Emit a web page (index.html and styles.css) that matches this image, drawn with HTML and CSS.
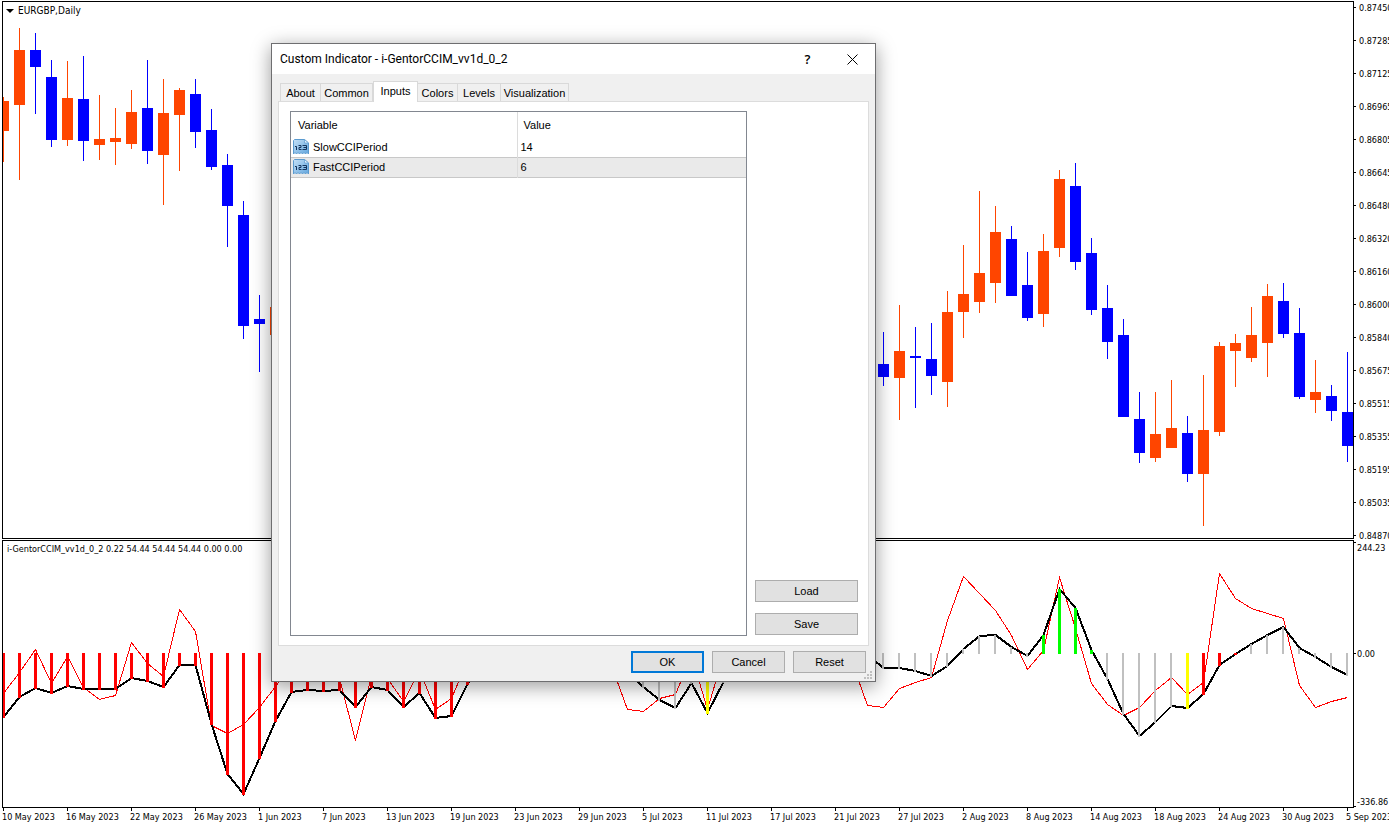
FILE: index.html
```html
<!DOCTYPE html>
<html lang="en">
<head>
<meta charset="utf-8">
<title>EURGBP,Daily</title>
<link rel="stylesheet" href="styles.css">
</head>
<body>
<main class="terminal">
  <section class="pane price-pane">
    <h1 class="pane-title symbol-title"><svg class="caret" viewBox="0 0 8 4" aria-hidden="true"><path d="M0 0h8L4 4z"/></svg>EURGBP,Daily</h1>
    <svg class="plot" id="price-plot" viewBox="3 2 1350 536" preserveAspectRatio="none" role="img" aria-label="Daily candles"></svg>
  </section>
  <ul class="axis price-axis">
    <li>0.87450</li><li>0.87285</li><li>0.87125</li><li>0.86965</li><li>0.86805</li><li>0.86645</li><li>0.86480</li><li>0.86320</li><li>0.86160</li><li>0.86000</li><li>0.85840</li><li>0.85675</li><li>0.85515</li><li>0.85355</li><li>0.85195</li><li>0.85035</li><li>0.84870</li>
  </ul>
  <section class="pane cci-pane">
    <h2 class="pane-title">i-GentorCCIM_vv1d_0_2 0.22 54.44 54.44 54.44 0.00 0.00</h2>
    <svg class="plot" id="cci-plot" viewBox="3 541 1350 266" preserveAspectRatio="none" role="img" aria-label="CCI histogram"></svg>
  </section>
  <ul class="axis cci-axis">
    <li>244.23</li><li>0.00</li><li>-336.86</li>
  </ul>
  <ul class="dates">
    <li>10 May 2023</li><li>16 May 2023</li><li>22 May 2023</li><li>26 May 2023</li><li>1 Jun 2023</li><li>7 Jun 2023</li><li>13 Jun 2023</li><li>19 Jun 2023</li><li>23 Jun 2023</li><li>29 Jun 2023</li><li>5 Jul 2023</li><li>11 Jul 2023</li><li>17 Jul 2023</li><li>21 Jul 2023</li><li>27 Jul 2023</li><li>2 Aug 2023</li><li>8 Aug 2023</li><li>14 Aug 2023</li><li>18 Aug 2023</li><li>24 Aug 2023</li><li>30 Aug 2023</li><li>5 Sep 2023</li>
  </ul>
</main>

<div class="dialog" role="dialog" aria-labelledby="dialog-title">
  <header class="titlebar">
    <h2 class="dialog-title" id="dialog-title">Custom Indicator - i-GentorCCIM_vv1d_0_2</h2>
    <button class="caption-button" type="button" aria-label="Help">?</button>
    <button class="caption-button" type="button" aria-label="Close"><svg class="close-icon" viewBox="0 0 11 11" aria-hidden="true"><path d="M.5.5l10 10M10.500.5l-10 10"/></svg></button>
  </header>
  <div class="dialog-body">
    <div class="tabs" role="tablist">
      <button class="tab" type="button" role="tab">About</button>
      <button class="tab" type="button" role="tab">Common</button>
      <button class="tab tab-active" type="button" role="tab" aria-selected="true">Inputs</button>
      <button class="tab" type="button" role="tab">Colors</button>
      <button class="tab" type="button" role="tab">Levels</button>
      <button class="tab" type="button" role="tab">Visualization</button>
    </div>
    <div class="tab-page" role="tabpanel">
      <div class="list">
        <table class="inputs">
          <thead><tr><th class="col-variable">Variable</th><th>Value</th></tr></thead>
          <tbody>
            <tr>
              <td><div class="variable"><svg class="type-icon" viewBox="0 0 16 16" aria-hidden="true"><use href="#number-icon"/></svg>SlowCCIPeriod</div></td>
              <td>14</td>
            </tr>
            <tr class="selected">
              <td><div class="variable"><svg class="type-icon" viewBox="0 0 16 16" aria-hidden="true"><use href="#number-icon"/></svg>FastCCIPeriod</div></td>
              <td>6</td>
            </tr>
          </tbody>
        </table>
      </div>
      <div class="side">
        <button class="button" type="button">Load</button>
        <button class="button" type="button">Save</button>
      </div>
    </div>
    <footer class="actions">
      <button class="button button-default" type="button">OK</button>
      <button class="button" type="button">Cancel</button>
      <button class="button" type="button">Reset</button>
    </footer>
  </div>
  <svg class="grip" viewBox="0 0 8 8" aria-hidden="true"><path d="M6 0h2v2H6zM3 3h2v2H3zM6 3h2v2H6zM0 6h2v2H0zM3 6h2v2H3zM6 6h2v2H6z"/></svg>
</div>

<svg class="defs" width="0" height="0" aria-hidden="true">
  <defs>
    <linearGradient id="sheet" x1="0" y1="0" x2="1" y2="1">
      <stop offset="0" stop-color="#c4e0f6"/><stop offset="1" stop-color="#62a6de"/>
    </linearGradient>
    <symbol id="number-icon" viewBox="0 0 16 16">
      <path d="M.5 1.500l1-1h10l4 3.500v11l-1.500-1.500-1.500 1.500-1.500-1.500-1.500 1.500L8 13.500 6.500 15 5 13.500 3.500 15 2 13.500.5 15z" fill="url(#sheet)" stroke="#5b9bd0" stroke-width="1"/>
      <path d="M11.500.5V4h4z" fill="#e4f2fd" stroke="#5b9bd0" stroke-width=".7"/>
      <path d="M2 7.500h1.500V11M5.500 6.500H8v2H6v2h2.500M9.500 6.500h4v4h-4M10.500 8.500h3" fill="none" stroke="#14345c" stroke-width="1"/>
    </symbol>
  </defs>
</svg>
<script src="chart.js"></script>
</body>
</html>
```
FILE: styles.css
```css
* { box-sizing: border-box; }

body {
  margin: 0;
  background: #fff;
  color: #000;
  overflow: hidden;
  font-family: "DejaVu Sans Condensed", "Open Sans", sans-serif;
  font-size: 9px;
}

h1, h2, ul { margin: 0; padding: 0; font-weight: normal; list-style: none; }

.terminal {
  display: grid;
  grid-template-columns: minmax(0, 1fr) 35px;
  grid-template-rows: minmax(0, 538fr) minmax(0, 269fr) 17px;
  height: 100vh;
  padding: 1px 0 0 2px;
}

.pane { position: relative; border: 1px solid #000; }
.cci-pane, .cci-axis { margin-top: 1px; }

.plot { display: block; width: 100%; height: 100%; shape-rendering: crispEdges; }

.pane-title {
  position: absolute;
  top: 1px;
  left: 4px;
  display: flex;
  align-items: center;
  gap: 4px;
  font-size: 9px;
  line-height: 15px;
  white-space: nowrap;
}
.symbol-title { left: 3px; font-size: 10px; }
.caret { width: 8px; height: 4px; }

.axis { line-height: 14px; white-space: nowrap; }
.axis li { position: relative; height: 13px; padding-left: 3px; }
.axis li::before {
  content: "";
  position: absolute;
  left: 0;
  top: 6px;
  width: 2px;
  height: 1px;
  background: #000;
}
.price-axis {
  display: flex;
  flex-direction: column;
  justify-content: space-between;
  margin-bottom: -3px;
}
.price-axis li { padding-left: 5px; }
.cci-axis { display: grid; grid-template-rows: 106fr 148fr 13px; padding-top: 1px; }
.cci-axis li:first-child::before { top: 1px; }
.cci-axis li:last-child::before { top: 11px; }

.dates {
  grid-column: 1 / -1;
  display: flex;
  overflow: hidden;
  line-height: 18px;
  white-space: nowrap;
}
.dates li { position: relative; flex: 0 0 calc(100% * 64 / 1387); }
.dates li::before {
  content: "";
  position: absolute;
  left: 1px;
  top: 0;
  width: 1px;
  height: 3px;
  background: #000;
}

.up { fill: #ff4500; }
.down { fill: #00f; }
.cci { fill: none; stroke: #000; stroke-width: 2; }
.fast { fill: none; stroke: #f00; stroke-width: 1; }
.bar-red { fill: #f00; }
.bar-gray { fill: #c0c0c0; }
.bar-lime { fill: #0f0; }
.bar-yellow { fill: #ff0; }

.dialog {
  position: absolute;
  top: 43px;
  left: 271px;
  display: flex;
  flex-direction: column;
  width: 605px;
  height: 639px;
  border: 1px solid #6e6e70;
  background: #f0f0f0;
  box-shadow: 0 4px 18px rgba(0, 0, 0, .4);
  font-family: "Liberation Sans", Arial, sans-serif;
  font-size: 11px;
}

button { margin: 0; padding: 0; color: #000; font: inherit; }

.titlebar { display: flex; align-items: center; height: 30px; padding-left: 8px; background: #fff; }
.dialog-title { flex: 1; font-family: Roboto, sans-serif; font-size: 12px; }
.caption-button {
  width: 45px;
  height: 30px;
  border: 0;
  background: none;
  font-family: "Open Sans", sans-serif;
  font-size: 13px;
  font-weight: 600;
}
.close-icon { display: block; width: 11px; height: 11px; margin: auto; stroke: #000; }

.dialog-body { flex: 1; display: flex; flex-direction: column; padding: 7px 6px 8px; }

.tabs {
  display: grid;
  grid-template-columns: 41px 52px 45px 40px 43px 68px;
  align-items: end;
  padding-left: 2px;
}
.tab {
  height: 18px;
  border: 1px solid #d9d9d9;
  border-width: 1px 1px 0 0;
  background: #f0f0f0;
}
.tab:first-child { border-left-width: 1px; }
.tab-active {
  position: relative;
  height: 21px;
  margin-bottom: -1px;
  padding-bottom: 3px;
  border-left-width: 1px;
  background: #fff;
}

.tab-page {
  flex: 1;
  display: flex;
  gap: 8px;
  padding: 9px 10px 9px 11px;
  border: 1px solid #dcdcdc;
  background: #fff;
}
.list { flex: 1; border: 1px solid #828790; }
.inputs { width: 100%; border-collapse: collapse; table-layout: fixed; }
.inputs th { height: 25px; padding: 0 6px; font-weight: normal; text-align: left; }
.inputs th:first-child { padding-left: 7px; }
.inputs td { height: 20px; padding: 0 3px; }
.inputs th + th, .inputs td + td { border-left: 1px solid #dcdcdc; }
.col-variable { width: 226px; }
.inputs .selected { border: 1px solid #c8c8c8; border-width: 1px 0; background: #eaeaea; }
.variable { display: flex; align-items: center; gap: 4px; }
.type-icon { width: 16px; height: 16px; margin-left: -1px; }

.side { display: flex; flex-direction: column; justify-content: flex-end; gap: 11px; width: 103px; padding-bottom: 1px; }
.button { height: 22px; border: 1px solid #adadad; background: #e1e1e1; }
.button-default { border: 2px solid #0078d7; }
.actions { display: flex; justify-content: flex-end; gap: 8px; padding: 5px 3px 0 0; }
.actions .button { width: 73px; }

.grip { position: absolute; right: 3px; bottom: 2px; width: 8px; height: 8px; fill: #bfbfbf; }
.defs { position: absolute; }
```
FILE: chart.js
```js
// Candle rows: slot, direction (1 up, 0 down), high, body top, body bottom, low.
const candles = [
  [0,1,97,101,131,162],[1,1,28,50,105,180],[2,0,33,50,67,114],[3,0,60,77,140,147],
  [4,1,61,98,140,146],[5,0,56,99,141,161],[6,1,95,139,145,160],[7,1,108,138,142,165],
  [8,1,90,112,144,149],[9,0,60,108,151,164],[10,1,79,113,155,205],[11,1,88,90,115,171],
  [12,0,79,94,132,148],[13,0,109,130,167,170],[14,0,154,165,206,247],[15,0,201,215,326,339],
  [16,0,295,319,324,372],[17,1,307,307,335,335],
  [55,0,332,364,377,386],[56,1,305,351,378,420],[57,0,327,356,358,408],[58,0,323,359,376,395],
  [59,1,291,312,382,407],[60,1,245,294,312,338],[61,1,191,273,302,313],[62,1,206,232,283,303],
  [63,0,226,239,296,296],[64,0,252,285,318,321],[65,1,234,251,314,327],[66,1,170,179,248,257],
  [67,0,163,186,262,270],[68,0,238,253,310,315],[69,0,285,308,342,359],[70,0,319,335,417,417],
  [71,0,392,419,453,463],[72,1,392,434,458,462],[73,1,380,428,448,448],[74,0,416,433,474,482],
  [75,1,375,430,474,526],[76,1,342,346,432,436],[77,1,334,343,351,387],[78,1,307,335,358,362],
  [79,1,284,296,343,377],[80,0,283,301,334,338],[81,0,308,333,397,399],[82,1,360,392,400,413],
  [83,0,385,396,411,421],[84,0,352,412,446,462]
];

// Each run starts at a slot and lists one value per following slot.
const slowRuns = [
  [0, [717,697,688,693,686,689,689,689,678,681,687,665,665,724,774,794,758,721,692,690,691,690,707,687,690,707,693,718,716,684,665]],
  [39, [673,687,700,708,683,713,682]],
  [54, [655,668,668,671,676,666,649,636,635,647,656,635,589,608,650,679,714,736,722,706,708,694,665,654,644,635,627,648,657,667,675]]
];
const fastRuns = [
  [0, [693,672,649,683,656,687,699,695,642,663,676,609,631,725,733,724,707,686,665]],
  [20, [665,678,740,675,678,701,670,709,698,660]],
  [38, [665,709,711,698,694,655,709,655]],
  [53, [660,705,707,688,682,677,620,576,593,610,635,669,650,577,628,683,704,715,707,690,677,694,682,573,598,608,613,618,685,707,701,697]]
];

const slotX = i => 3 + 16 * i;
const zeroY = 653;
const rect = (cls, x, y, w, h) => `<rect class="${cls}" x="${x}" y="${y}" width="${w}" height="${h}"/>`;

document.getElementById("price-plot").innerHTML = candles.map(([i, up, high, top, bottom, low]) => {
  const cls = up ? "up" : "down";
  return rect(cls, slotX(i), high, 1, low - high) + rect(cls, slotX(i) - 5, top, 11, bottom - top);
}).join("");

const line = (cls, shift) => ([start, values]) =>
  `<polyline class="${cls}" points="${values.map((y, k) => `${slotX(start + k) + 0.5},${y + shift}`).join(" ")}"/>`;

function barColor(i) {
  if (i === 44 || i === 74) return "yellow";
  if (i < 31 || (i >= 75 && i <= 77)) return "red";
  if (i >= 65 && i <= 68) return "lime";
  return "gray";
}

const bars = slowRuns.flatMap(([start, values]) => values.map((y, k) => {
  const i = start + k;
  const color = barColor(i);
  const top = Math.min(y, zeroY);
  return rect("bar-" + color, slotX(i) - 1, top, color === "gray" ? 2 : 3, Math.abs(y - zeroY) + 1);
}));

document.getElementById("cci-plot").innerHTML =
  fastRuns.map(line("fast", 0.5)).join("") + slowRuns.map(line("cci", 0)).join("") + bars.join("");
```
